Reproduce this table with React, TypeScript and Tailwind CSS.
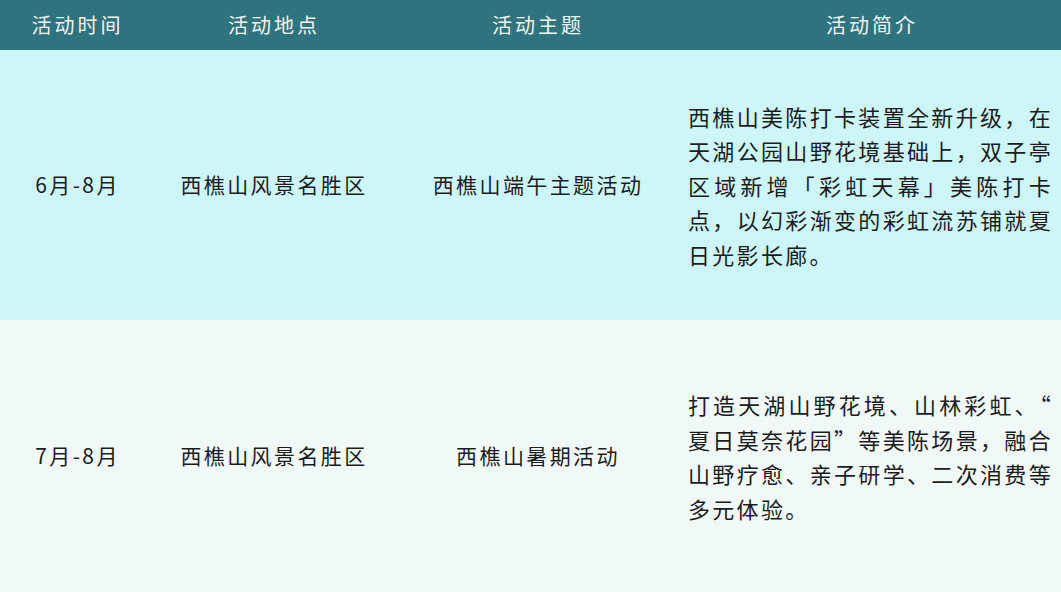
const font = { fontFamily: '"Noto Sans CJK SC", "Noto Sans", sans-serif' };

interface Row {
  time: string;
  place: string;
  theme: string;
  lines: string[];
  bg: string;
  height: string;
}

const rows: Row[] = [
  {
    time: "6月-8月",
    place: "西樵山风景名胜区",
    theme: "西樵山端午主题活动",
    lines: [
      "西樵山美陈打卡装置全新升级，在",
      "天湖公园山野花境基础上，双子亭",
      "区域新增「彩虹天幕」美陈打卡",
      "点，以幻彩渐变的彩虹流苏铺就夏",
      "日光影长廊。",
    ],
    bg: "bg-[#ccf6f7]",
    height: "h-[270px]",
  },
  {
    time: "7月-8月",
    place: "西樵山风景名胜区",
    theme: "西樵山暑期活动",
    lines: [
      "打造天湖山野花境、山林彩虹、“",
      "夏日莫奈花园”等美陈场景，融合",
      "山野疗愈、亲子研学、二次消费等",
      "多元体验。",
    ],
    bg: "bg-[#f0f9f8]",
    height: "h-[272px]",
  },
];

const cols = "grid grid-cols-[155px_238px_290px_378px]";

export default function App() {
  return (
    <div className="w-[1061px] h-[592px] overflow-hidden bg-white" style={font}>
      {/* Header */}
      <div className={`${cols} h-[50px] bg-[#2e737d] text-[#f2f5f5] text-[20px] tracking-[3px]`}>
        {["活动时间", "活动地点", "活动主题", "活动简介"].map((h) => (
          <div key={h} className="flex items-center justify-center">
            {h}
          </div>
        ))}
      </div>

      {rows.map((r) => (
        <div key={r.time} className={`${cols} ${r.height} ${r.bg} text-[#1c1c1c] text-[21px] tracking-[2.4px]`}>
          <div className="flex items-center justify-center">{r.time}</div>
          <div className="flex items-center justify-center">{r.place}</div>
          <div className="flex items-center justify-center">{r.theme}</div>
          <div className="flex flex-col justify-center pl-[5px]">
            <div className="w-[365px] text-[22px] leading-[34.5px] tracking-[2.3px]">
              {r.lines.map((l, i) => (
                <div
                  key={i}
                  className={i < r.lines.length - 1 ? "text-justify [text-align-last:justify] whitespace-nowrap" : "whitespace-nowrap"}
                >
                  {l}
                </div>
              ))}
            </div>
          </div>
        </div>
      ))}
    </div>
  );
}
